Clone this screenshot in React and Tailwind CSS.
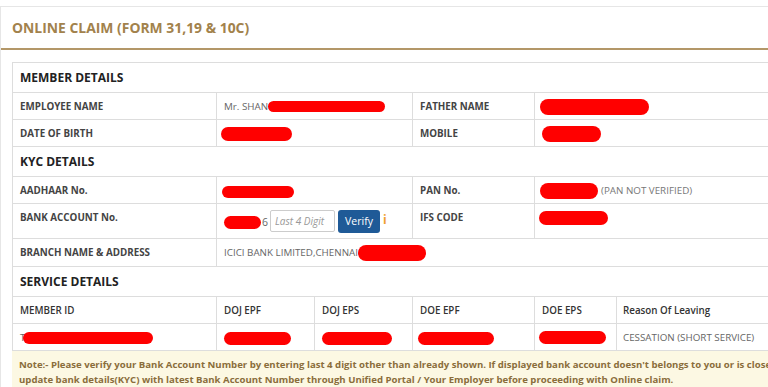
import React from "react";

const Red = ({ className }) => (
  <span className={"inline-block shrink-0 rounded-full bg-[#ff0000] " + className} />
);

const Label = ({ children, className = "" }) => (
  <div className={"border-r border-[#dddddd] px-[7px] py-[6px] font-bold text-[#444444] " + className}>{children}</div>
);

const Value = ({ children, className = "" }) => (
  <div className={"flex items-center border-r border-[#dddddd] px-[5px] text-[#666666] " + className}>{children}</div>
);

const Section = ({ title }) => (
  <div className="border-b border-[#dddddd] px-[7px] h-[30px] flex items-center text-[12px] font-bold text-[#222222]">
    {title}
  </div>
);

const Row = ({ children, className = "" }) => (
  <div className={"grid grid-cols-[204px_196px_122px_1fr] border-b border-[#dddddd] " + className}>{children}</div>
);

export default function App() {
  return (
    <div className="w-[768px] h-[387px] overflow-hidden bg-white font-['Open_Sans',sans-serif] text-[9.8px] leading-[15px]">
      <div className="w-[820px] mt-[6px] border-t border-l border-[#e6e6e6]">
        {/* Title */}
        <div className="h-[43px] flex items-center px-[11px] border-b-2 border-[#b39768]">
          <h1 className="text-[13.9px] font-bold text-[#a2824c]">ONLINE CLAIM (FORM 31,19 &amp; 10C)</h1>
        </div>

        <div className="pl-[11px] pt-[12px]">
          <div className="border-t border-l border-[#dddddd]">
            <Section title="MEMBER DETAILS" />
            <Row className="h-[27px]">
              <Label>EMPLOYEE NAME</Label>
              <Value className="pl-[7px]">
                <span>Mr. SHAN</span>
                <Red className="w-[117px] h-[11px]" />
              </Value>
              <Label>FATHER NAME</Label>
              <Value>
                <Red className="w-[109px] h-[16px]" />
              </Value>
            </Row>
            <Row className="h-[27px]">
              <Label>DATE OF BIRTH</Label>
              <Value className="pl-[4px]">
                <Red className="w-[71px] h-[14px]" />
              </Value>
              <Label>MOBILE</Label>
              <Value className="pl-[7px]">
                <Red className="w-[59px] h-[16px]" />
              </Value>
            </Row>

            <Section title="KYC DETAILS" />
            <Row className="h-[27px]">
              <Label>AADHAAR No.</Label>
              <Value>
                <Red className="w-[72px] h-[12px] mt-[3px]" />
              </Value>
              <Label>PAN No.</Label>
              <Value>
                <Red className="w-[58px] h-[16px]" />
                <span className="ml-[3px] text-[#777777]">(PAN NOT VERIFIED)</span>
              </Value>
            </Row>
            <Row className="h-[35px]">
              <Label>BANK ACCOUNT No.</Label>
              <div className="flex items-center border-r border-[#dddddd] pl-[7px] text-[#666666]">
                <Red className="w-[37px] h-[13px] mt-[3px]" />
                <span className="ml-[1px] mt-[3px] text-[10.5px]">6</span>
                <input
                  placeholder="Last 4 Digit"
                  className="ml-[2px] w-[65px] h-[22px] border border-[#cccccc] rounded-[2px] px-[4px] text-[10px] italic placeholder:text-[#999999] outline-none"
                />
                <button className="ml-[3px] w-[42px] h-[23px] rounded-[3px] bg-[#1f5a97] text-white text-[10.5px] mt-[1px]">
                  Verify
                </button>
                <span className="ml-[3px] -mt-[3px] text-[12px] font-bold text-[#f0a030]">i</span>
              </div>
              <Label>IFS CODE</Label>
              <div className="border-r border-[#dddddd] pl-[4px] pt-[7px]">
                <Red className="w-[69px] h-[14px] block" />
              </div>
            </Row>
            <div className="grid grid-cols-[204px_1fr] border-b border-[#dddddd] h-[28px]">
              <Label>BRANCH NAME &amp; ADDRESS</Label>
              <div className="flex items-center pl-[7px] text-[#666666]">
                <span className="whitespace-nowrap">ICICI BANK LIMITED,CHENNAI</span>
                <Red className="w-[68px] h-[16px]" />
              </div>
            </div>

            <Section title="SERVICE DETAILS" />
            <div className="grid grid-cols-[204px_98px_98px_122px_82px_1fr] border-b border-[#dddddd] h-[27px] font-semibold text-[#333333]">
              <div className="border-r border-[#dddddd] px-[7px] flex items-center">MEMBER ID</div>
              <div className="border-r border-[#dddddd] px-[7px] flex items-center">DOJ EPF</div>
              <div className="border-r border-[#dddddd] px-[7px] flex items-center">DOJ EPS</div>
              <div className="border-r border-[#dddddd] px-[7px] flex items-center">DOE EPF</div>
              <div className="border-r border-[#dddddd] px-[7px] flex items-center">DOE EPS</div>
              <div className="px-[6px] flex items-center">Reason Of Leaving</div>
            </div>
            <div className="grid grid-cols-[204px_98px_98px_122px_82px_1fr] border-b border-[#dddddd] h-[27px] text-[#666666]">
              <div className="border-r border-[#dddddd] pl-[7px] flex items-center">
                <span>T</span>
                <Red className="w-[130px] h-[12px] -ml-[2px] mt-[2px]" />
              </div>
              <div className="border-r border-[#dddddd] pl-[7px] flex items-center">
                <Red className="w-[67px] h-[13px] mt-[2px]" />
              </div>
              <div className="border-r border-[#dddddd] pl-[7px] flex items-center">
                <Red className="w-[70px] h-[13px] mt-[2px]" />
              </div>
              <div className="border-r border-[#dddddd] pl-[5px] flex items-center">
                <Red className="w-[76px] h-[13px] mt-[3px]" />
              </div>
              <div className="border-r border-[#dddddd] pl-[4px] flex items-center">
                <Red className="w-[67px] h-[13px]" />
              </div>
              <div className="px-[6px] flex items-center whitespace-nowrap">CESSATION (SHORT SERVICE)</div>
            </div>
          </div>

          {/* Note */}
          <div className="bg-[#fcf8e3] px-[7px] pt-[6px] pb-[6px] text-[9.6px] font-bold text-[#8a6d3b] leading-[15px]">
            <span className="block whitespace-nowrap">
              Note:- Please verify your Bank Account Number by entering last 4 digit other than already shown. If displayed bank account doesn't belongs to you or is closed
            </span>
            <span className="block whitespace-nowrap">
              update bank details(KYC) with latest Bank Account Number through Unified Portal / Your Employer before proceeding with Online claim.
            </span>
          </div>
        </div>
      </div>
    </div>
  );
}
